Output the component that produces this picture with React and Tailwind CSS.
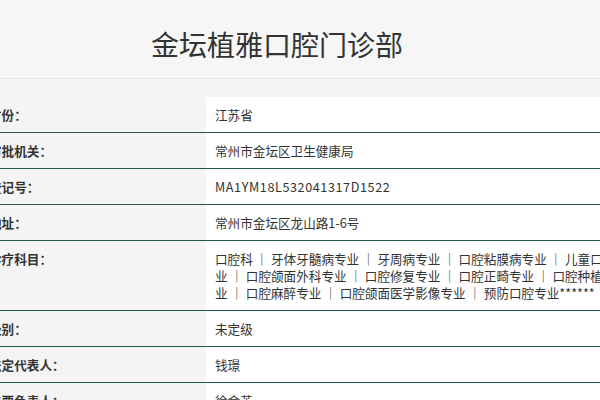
const rows = [
  { label: '省份：', value: '江苏省' },
  { label: '审批机关：', value: '常州市金坛区卫生健康局' },
  { label: '登记号：', value: 'MA1YM18L532041317D1522', mono: true },
  { label: '地址：', value: '常州市金坛区龙山路1-6号' },
  {
    label: '诊疗科目：',
    lines: [
      '口腔科 ｜ 牙体牙髓病专业 ｜ 牙周病专业 ｜ 口腔粘膜病专业 ｜ 儿童口腔专',
      '业 ｜ 口腔颌面外科专业 ｜ 口腔修复专业 ｜ 口腔正畸专业 ｜ 口腔种植专',
      '业 ｜ 口腔麻醉专业 ｜ 口腔颌面医学影像专业 ｜ 预防口腔专业******',
    ],
  },
  { label: '级别：', value: '未定级' },
  { label: '法定代表人：', value: '钱璟' },
  { label: '主要负责人：', value: '徐金英' },
]

function InfoRow({ label, value, lines, mono }) {
  return (
    <div className="grid grid-cols-[229px_1fr] border-b border-[#1f5b3b]">
      <div className="pl-[12px] py-[9px] font-bold text-[#333]">{label}</div>
      <div className="bg-white pl-[9px] py-[9px] text-[#333] whitespace-nowrap">
        {lines ? (
          lines.map((line, i) => <div key={i}>{line}</div>)
        ) : (
          <span className={mono ? 'tracking-[0.6px]' : ''}>{value}</span>
        )}
      </div>
    </div>
  )
}

export default function App() {
  return (
    <div
      className="w-[600px] h-[400px] overflow-hidden bg-[#f4f4f4]"
      style={{ fontFamily: '"Noto Sans CJK SC", "Noto Sans", sans-serif' }}
    >
      <header className="h-[79px] bg-[#f6f6f6] border-b border-[#e7e7e7] flex justify-center pr-[46px] pt-[25px]">
        <h1 className="text-[28px] leading-[38px] font-normal text-[#333]">金坛植雅口腔门诊部</h1>
      </header>

      <div className="pt-[18px]">
        <div className="ml-[-23px] w-[680px] text-[12.6px] leading-[17px]">
          {rows.map((r) => (
            <InfoRow key={r.label} {...r} />
          ))}
        </div>
      </div>
    </div>
  )
}
